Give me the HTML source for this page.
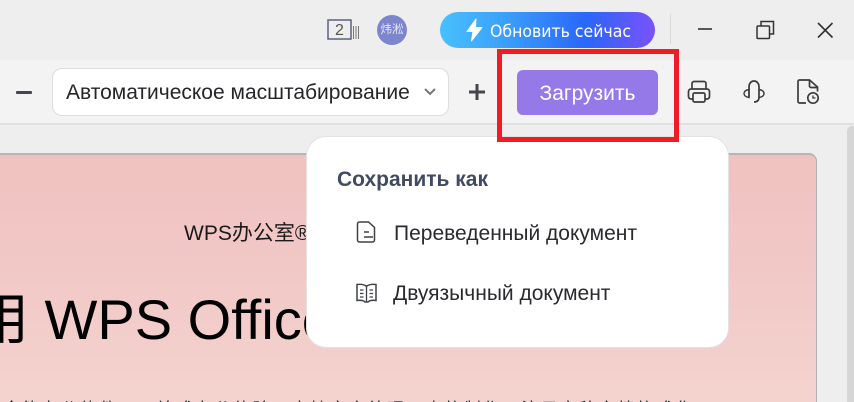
<!DOCTYPE html>
<html><head><meta charset="utf-8"><style>
*{margin:0;padding:0;box-sizing:border-box}
html,body{width:854px;height:402px;overflow:hidden;background:#eee;font-family:"Liberation Sans","Noto Sans CJK SC",sans-serif}
.a{position:absolute;white-space:nowrap}
svg{position:absolute;overflow:visible}
</style></head><body>
<div class="a" style="left:0;top:60px;width:854px;height:65px;background:#f3f3f3;border-bottom:2px solid #e0e0e0"></div>
<div class="a" style="left:847px;top:126px;width:7px;height:276px;background:#d6d6d6;border-top-left-radius:5px"></div>
<div class="a" style="left:0;top:153px;width:817px;height:249px;overflow:hidden;background:linear-gradient(180deg,#f0c1bf 0%,#f1c8c6 45%,#f4d3cf 100%);border-right:1px solid #b5b0b0;border-top:2px solid #b9b3b3;border-top-right-radius:8px">
<div class="a" style="left:184px;top:67px;font-size:21px;line-height:24px;color:#1a1a1a">WPS办公室®</div>
<div class="a" style="left:-27px;top:129.500px;font-size:56px;line-height:70px;color:#000">用 WPS Office</div>
<div class="a" style="left:3px;top:243px;height:4px;overflow:hidden;font-size:17px;line-height:24px;color:#222;letter-spacing:2.2px">全能办公软件，一站式办公体验，支持文字处理，表格制作，演示文稿文档格式化</div>
</div>

<!-- title bar -->
<svg style="left:327px;top:18px" width="32" height="24" fill="none" stroke="#5a6480"><rect x="1" y="2" width="23" height="19" stroke-width="1.5"/><path d="M26.500 8v13M29 8v13M31.500 8v13" stroke-width="1" stroke="#777"/></svg>
<div class="a" style="left:327px;top:21px;width:25px;text-align:center;font-size:16px;line-height:20px;color:#555">2</div>
<div class="a" style="left:377px;top:15px;width:30px;height:30px;border-radius:50%;background:#7c85ce;color:#e6e8f6;font-size:11.500px;line-height:30px;text-align:center">炜淞</div>
<div class="a" style="left:440px;top:12px;width:215px;height:36px;border-radius:18px;background:linear-gradient(90deg,#48c0fd 0%,#3ba0fd 30%,#2a66fb 68%,#7a52fb 100%)"></div>
<svg style="left:465px;top:18px" width="18" height="24"><path d="M11 1 2 13.500h6L6.500 23 17 9.500h-6.500z" fill="#fff" stroke="#fff" stroke-linejoin="round"/></svg>
<div class="a" style="left:490px;top:20px;font-size:17px;line-height:24px;color:#fff;font-family:'DejaVu Sans','Liberation Sans',sans-serif;transform-origin:0 50%;transform:scaleX(.925)">Обновить сейчас</div>
<div class="a" style="left:670px;top:14px;width:1px;height:30px;background:#d8d8d8"></div>
<svg style="left:690px;top:15px" width="150" height="30" fill="none" stroke="#333" stroke-width="1.600"><path d="M8 14h14"/><path d="M71 11V6.500h12.500V19h-4" stroke-width="1.500"/><rect x="67" y="11" width="12.500" height="12.500" rx="1" stroke-width="1.500"/><path d="M128 8l14.500 14.500M142.500 8 128 22.500"/></svg>

<!-- toolbar -->
<div class="a" style="left:16px;top:90.500px;width:16px;height:3.500px;background:#44464e;border-radius:1px"></div>
<div class="a" style="left:52px;top:68px;width:397px;height:48px;background:#fff;border:1px solid #ddd;border-radius:10px"></div>
<div class="a" style="left:66px;top:80px;font-size:21px;line-height:26px;color:#26262a">Автоматическое масштабирование</div>
<svg style="left:423px;top:87px" width="14" height="10" fill="none" stroke="#777" stroke-width="2"><path d="M2 2l5 5 5-5"/></svg>
<svg style="left:469px;top:84px" width="16" height="16" fill="none" stroke="#44464e" stroke-width="3"><path d="M0 8h16M8 0v16"/></svg>
<div class="a" style="left:517px;top:70px;width:141px;height:45px;border-radius:6px;background:#9679e8;color:#fff;font-size:21px;line-height:48px;text-align:center">Загрузить</div>
<svg style="left:686px;top:78px" width="150" height="30" fill="none" stroke="#3c3c3c" stroke-width="1.700">
<path d="M6 11V5.500a2 2 0 0 1 2-2h10a2 2 0 0 1 2 2V11"/><path d="M7 21H5a2.500 2.500 0 0 1-2.500-2.500V13.500A2.500 2.500 0 0 1 5 11h16a2.500 2.500 0 0 1 2.500 2.500v5A2.500 2.500 0 0 1 21 21h-2"/><rect x="7" y="15" width="12" height="9" rx="1.500"/>
<path d="M63 19.500V9c0-3.500 2-6 5-6s5 2.500 5 6v10c0 3-1.500 5-5 5"/><path d="M63 11.500c-3 .5-5 1.800-5 4s2 3.500 5 4zM73 11.500c3 .5 5 1.800 5 4s-2 3.500-5 4" stroke-width="1.400"/>
<path d="M120 25h-6.500a1.500 1.500 0 0 1-1.500-1.500V3.500A1.500 1.500 0 0 1 113.500 2h10l8 7v4.500M123.500 2v6a1.500 1.500 0 0 0 1.500 1.500h6.500"/><circle cx="127" cy="20" r="5.200"/><path d="M127 17.500V20h2.500" stroke-width="1.300"/></svg>

<!-- popup -->
<div class="a" style="left:306px;top:136px;width:423px;height:212px;background:#fff;border:1px solid #e2e2e2;border-radius:20px"></div>
<div class="a" style="left:337px;top:168px;font-size:21px;line-height:24px;font-weight:bold;color:#414a62">Сохранить как</div>
<svg style="left:355px;top:221px" width="24" height="84" fill="none" stroke="#3f4146" stroke-width="1.500">
<path d="M2.500 3a2 2 0 0 1 2-2h9l6 5.500V19a2 2 0 0 1-2 2H4.500a2 2 0 0 1-2-2z"/><path d="M9 11h5M9 16h9"/>
<path d="M11 65c-2-1.500-5-2-9-1.500v16c3.500-.5 6-.5 8 1.500h3c2-2 4.500-2 8-1.500v-16c-4-.5-7 0-9 1.500z"/><path d="M11.500 65v16M5 69h3.500M5 72.500h3.500M5 76h3.500M14.500 69H18M14.500 72.500H18M14.500 76H18" stroke-width="1.300"/></svg>
<div class="a" style="left:394px;top:221px;font-size:21px;line-height:26px;color:#2a2a2e">Переведенный документ</div>
<div class="a" style="left:393px;top:281px;font-size:21px;line-height:26px;color:#2a2a2e">Двуязычный документ</div>
<div class="a" style="left:497px;top:49px;width:182px;height:93px;border:5px solid #ee1c25"></div>
</body></html>
